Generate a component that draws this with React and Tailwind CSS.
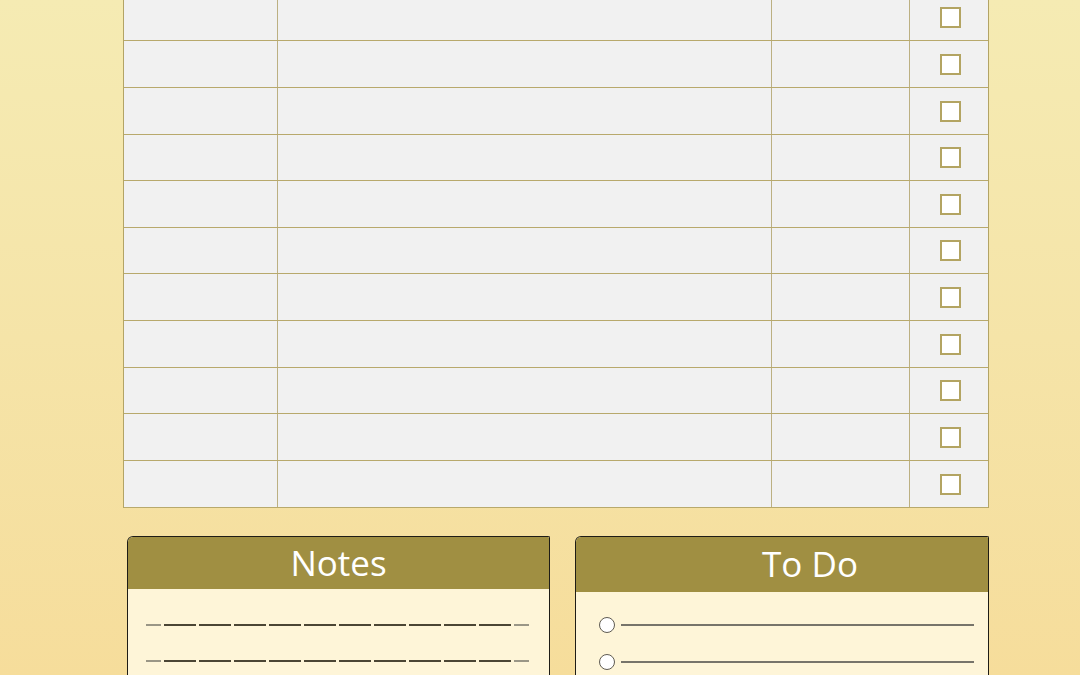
const rowHeights = [47, 47, 47, 46, 47, 46, 47, 47, 46, 47, 47]

function Checkbox() {
  return <div className="h-[21px] w-[21px] border-2 border-[#b3a462] bg-white" />
}

function NoteLine() {
  return (
    <div className="flex h-[2px] items-center">
      <div className="h-[1.5px] w-[15px] bg-[#9a9686]" />
      <div className="ml-[3px] h-[1.5px] w-[350px] bg-[repeating-linear-gradient(90deg,#4b4534_0_32px,transparent_32px_35px)]" />
      <div className="h-[1.5px] w-[15px] bg-[#9a9686]" />
    </div>
  )
}

function TodoLine() {
  return (
    <div className="flex items-center">
      <div className="h-[16px] w-[16px] rounded-full border-[1.5px] border-[#5f5b52] bg-white" />
      <div className="ml-[6px] h-[1.5px] w-[353px] bg-[#77746a]" />
    </div>
  )
}

export default function App() {
  return (
    <div
      className="h-[675px] w-[1080px] overflow-hidden bg-[linear-gradient(180deg,#f5ebb3_0%,#f5e4a8_50%,#f6dd9b_100%)]"
      style={{ fontFamily: '"Open Sans", "Liberation Sans", sans-serif' }}
    >
      <div className="ml-[123px] mt-[-7px] w-[866px] border-x border-t border-[#b3a466] bg-[#f1f1f1]">
        {rowHeights.map((h, i) => (
          <div
            key={i}
            className="flex border-b border-[#b8a96c]"
            style={{ height: h }}
          >
            <div className="w-[154px] border-r border-[#bcb082]" />
            <div className="w-[494px] border-r border-[#bcb082]" />
            <div className="w-[138px] border-r border-[#bcb082]" />
            <div className="flex flex-1 items-center justify-center pl-[3px]">
              <Checkbox />
            </div>
          </div>
        ))}
      </div>

      <div className="ml-[127px] mt-[28px] flex items-start gap-[25px]">
        <div className="w-[423px] overflow-hidden rounded-tl-[6px] rounded-tr-[2px] border-x-[1.5px] border-t-[1.5px] border-[#1e1c16] bg-[#fef5d8]">
          <div className="flex h-[52px] items-center justify-center bg-[#a08f42] text-[35px] text-white">
            Notes
          </div>
          <div className="flex flex-col gap-[34px] pl-[18px] pt-[35px]">
            <NoteLine />
            <NoteLine />
            <NoteLine />
          </div>
        </div>

        <div className="w-[414px] overflow-hidden rounded-tl-[6px] rounded-tr-[2px] border-x-[1.5px] border-t-[1.5px] border-[#1e1c16] bg-[#fef5d8]">
          <div className="flex h-[55px] items-center justify-center bg-[#a08f42] pl-[56px] text-[35px] text-white">
            To Do
          </div>
          <div className="flex flex-col gap-[21px] pl-[23px] pt-[25px]">
            <TodoLine />
            <TodoLine />
            <TodoLine />
          </div>
        </div>
      </div>
    </div>
  )
}
